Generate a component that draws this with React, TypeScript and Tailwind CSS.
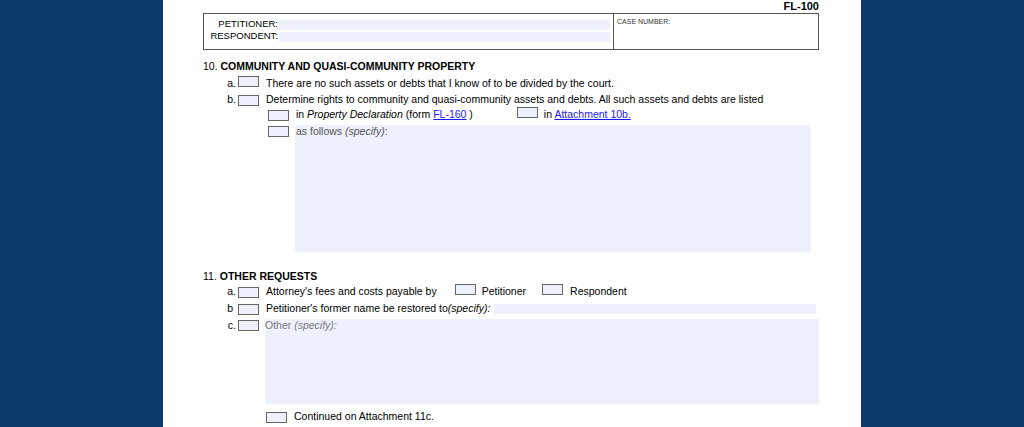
export default function App() {
  const Box = () => (
    <span className="inline-block w-[21px] h-[11px] border border-[#666] bg-[#eef1fb] shrink-0" />
  );
  return (
    <div className="w-[1024px] h-[427px] bg-[#0b3a6a] flex justify-center overflow-hidden" style={{ fontFamily: '"Liberation Sans", Arial, sans-serif' }}>
      <div className="w-[698px] h-full bg-white text-[10.5px] text-black relative pl-[40px] pr-[42px]">
        <div className="text-right font-bold text-[11px] leading-[12px] pt-[0px]">FL-100</div>
        <div className="flex border border-[#555] h-[37px] mt-[1px]">
          <div className="w-[410px] border-r border-[#555] pt-[5px] pr-[3px] flex flex-col gap-[1px]">
            <div className="flex items-center h-[11px]">
              <span className="w-[74px] text-right text-[9.5px]">PETITIONER:</span>
              <span className="flex-1 h-[10px] bg-[#eef1fb] ml-[1px]" />
            </div>
            <div className="flex items-center h-[11px]">
              <span className="w-[74px] text-right text-[9.5px]">RESPONDENT:</span>
              <span className="flex-1 h-[10px] bg-[#eef1fb] ml-[1px]" />
            </div>
          </div>
          <div className="flex-1 text-[7px] pl-[3px] pt-[3px] text-[#333]">CASE NUMBER:</div>
        </div>
        <div className="mt-[10px] leading-[12px]">10. <b>COMMUNITY AND QUASI-COMMUNITY PROPERTY</b></div>
        <div className="flex items-center mt-[6px] h-[12px]">
          <span className="w-[35px] text-right pr-[2px]">a.</span><span className="ml-[0px]"><Box /></span>
          <span className="ml-[7px]">There are no such assets or debts that I know of to be divided by the court.</span>
        </div>
        <div className="flex items-center mt-[4px] h-[12px]">
          <span className="w-[35px] text-right pr-[2px]">b.</span><Box />
          <span className="ml-[7px]">Determine rights to community and quasi-community assets and debts. All such assets and debts are listed</span>
        </div>
        <div className="flex items-center mt-[3px] h-[12px] pl-[65px]">
          <Box /><span className="ml-[7px]">in <i>Property Declaration</i> (form <span className="text-[#1a1aff] underline">FL-160</span> )</span>
          <span className="ml-[44px]"><Box /></span><span className="ml-[6px]">in <span className="text-[#1a1aff] underline">Attachment 10b.</span></span>
        </div>
        <div className="flex mt-[4px] pl-[65px]">
          <div className="pt-[1px]"><Box /></div>
          <div className="ml-[6px] flex-1 mr-[8px] h-[127px] bg-[#eef1fb] text-[#555] pl-[1px] pt-[0px] leading-[12px]">as follows <i>(specify)</i>:</div>
        </div>
        <div className="mt-[18px] leading-[12px]">11. <b>OTHER REQUESTS</b></div>
        <div className="flex items-center mt-[4px] h-[12px]">
          <span className="w-[35px] text-right pr-[2px]">a.</span><Box />
          <span className="ml-[7px]">Attorney's fees and costs payable by</span>
          <span className="ml-[18px]"><Box /></span><span className="ml-[6px]">Petitioner</span>
          <span className="ml-[16px]"><Box /></span><span className="ml-[7px]">Respondent</span>
        </div>
        <div className="flex items-center mt-[5px] h-[12px]">
          <span className="w-[35px] text-right pr-[5px]">b</span><Box />
          <span className="ml-[7px]">Petitioner's former name be restored to<i>(specify):</i></span>
          <span className="flex-1 ml-[4px] mr-[3px] h-[10px] bg-[#eef1fb]" />
        </div>
        <div className="flex mt-[4px]">
          <span className="w-[35px] text-right pr-[2px] leading-[12px]">c.</span><span className="pt-[1px]"><Box /></span>
          <div className="ml-[6px] flex-1 h-[85px] bg-[#eef1fb] text-[#777] leading-[12px]">Other <i>(specify):</i></div>
        </div>
        <div className="flex items-center mt-[7px] h-[12px] pl-[63px]">
          <Box /><span className="ml-[7px]">Continued on Attachment 11c.</span>
        </div>
      </div>
    </div>
  );
}
